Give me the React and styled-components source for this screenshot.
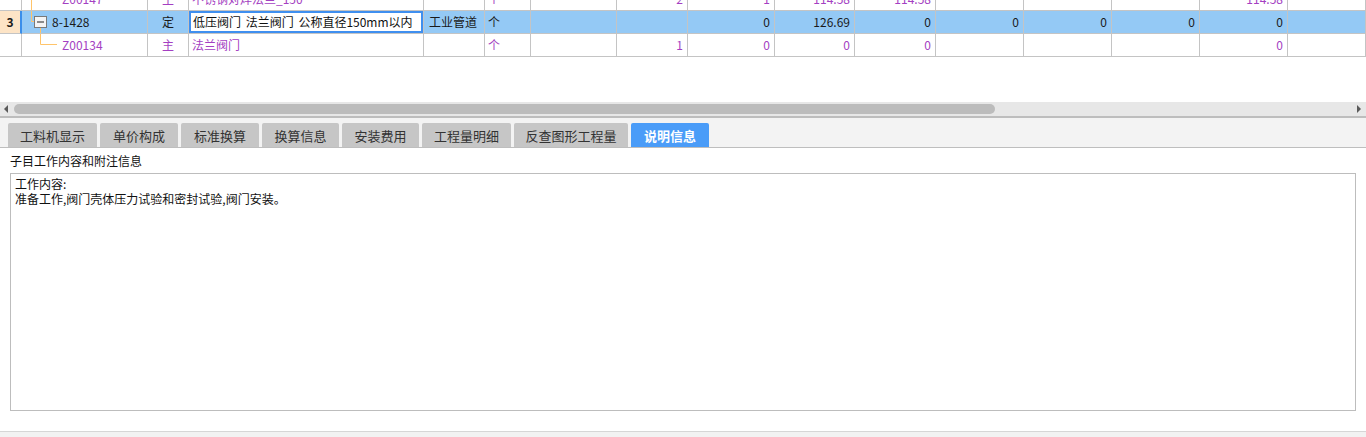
import React from "react";
import styled, { createGlobalStyle } from "styled-components";

const GlobalStyle = createGlobalStyle`
  html, body {
    margin: 0;
    padding: 0;
    background: #ffffff;
  }
  body {
    font-family: "Noto Sans CJK SC", "Noto Sans", sans-serif;
    font-size: 12px;
    color: #1a1a1a;
  }
`;

const COLS =
  "22px 126px 41px 235px 61px 46px 86px 71px 87px 80px 81px 88px 88px 88px 88px 1fr";

const rows = [
  {
    num: "",
    tree: "pass",
    code: "Z00147",
    type: "主",
    name: "不锈钢对焊法兰_150",
    spec: "",
    unit: "个",
    vals: ["", "2", "1", "114.58", "114.58", "", "", "", "114.58", ""],
    material: true,
  },
  {
    num: "3",
    tree: "parent",
    code: "8-1428",
    type: "定",
    name: "低压阀门 法兰阀门 公称直径150mm以内",
    spec: "工业管道",
    unit: "个",
    vals: ["", "", "0", "126.69", "0", "0", "0", "0", "0", ""],
    selected: true,
  },
  {
    num: "",
    tree: "child",
    code: "Z00134",
    type: "主",
    name: "法兰阀门",
    spec: "",
    unit: "个",
    vals: ["", "1", "0", "0", "0", "", "", "", "0", ""],
    material: true,
  },
];

const tabs = [
  { label: "工料机显示", w: 89 },
  { label: "单价构成", w: 78 },
  { label: "标准换算", w: 78 },
  { label: "换算信息", w: 77 },
  { label: "安装费用", w: 77 },
  { label: "工程量明细", w: 89 },
  { label: "反查图形工程量", w: 114 },
  { label: "说明信息", w: 78 },
];

const Page = styled.div`
  display: flex;
  flex-direction: column;
  height: 437px;
  overflow: hidden;
`;

const GridViewport = styled.div`
  height: 102px;
  overflow: hidden;
  background: #fff;
`;

const GridBody = styled.div`
  margin-top: -12px;
`;

const Row = styled.div`
  display: grid;
  grid-template-columns: ${COLS};
  height: 23px;
  background: ${(p) => (p.$selected ? "#94c9f5" : "#fff")};
  color: ${(p) => (p.$material ? "#a43fc2" : "#1a1a1a")};
`;

const Cell = styled.div`
  box-sizing: border-box;
  height: 23px;
  border-right: 1px solid #c4c4c4;
  border-bottom: 1px solid #c4c4c4;
  display: flex;
  align-items: center;
  justify-content: ${(p) =>
    p.$align === "right" ? "flex-end" : p.$align === "center" ? "center" : "flex-start"};
  padding: 0 ${(p) => (p.$align === "right" ? "4px" : "0")} 0
    ${(p) => (p.$pad ? p.$pad : 0)}px;
  white-space: nowrap;
  overflow: hidden;
  line-height: 22px;
`;

const NumCell = styled(Cell)`
  background: ${(p) => (p.$selected ? "#fde4c6" : "transparent")};
  border-right: ${(p) => (p.$selected ? "2px solid #3b8eea" : "1px solid #c4c4c4")};
  font-weight: bold;
  font-size: 12px;
  color: #1a1a1a;
`;

const CodeCell = styled(Cell)`
  gap: 0;
`;

const EditCell = styled(Cell)`
  background: ${(p) => (p.$editing ? "#fff" : "transparent")};
  box-shadow: ${(p) => (p.$editing ? "inset 0 0 0 2px #3f8fef" : "none")};
  color: ${(p) => (p.$editing ? "#111" : "inherit")};
  padding-left: ${(p) => (p.$editing ? 4 : 3)}px;
  word-spacing: ${(p) => (p.$editing ? "2px" : "0")};
`;

const TreeGlyph = styled.svg`
  flex: none;
  display: block;
`;

const CodeText = styled.span`
  font-size: 12px;
`;

const Tree = ({ kind }) => {
  if (kind === "parent") {
    return (
      <TreeGlyph width="30" height="22" viewBox="0 0 30 22">
        <path d="M9.5 0 V10.5 H12" stroke="#ffc46a" fill="none" />
        <rect x="12.5" y="5.5" width="12" height="11" fill="#f4f4f4" stroke="#7a7a7a" />
        <path d="M15 11 H22" stroke="#222" />
        <path d="M18.5 17 V22" stroke="#ffc46a" />
      </TreeGlyph>
    );
  }
  if (kind === "child") {
    return (
      <TreeGlyph width="40" height="22" viewBox="0 0 40 22">
        <path d="M18.5 0 V10.5 H35" stroke="#ffc46a" fill="none" />
      </TreeGlyph>
    );
  }
  return (
    <TreeGlyph width="40" height="22" viewBox="0 0 40 22">
      <path d="M9.5 0 V22" stroke="#ffc46a" />
    </TreeGlyph>
  );
};

const ScrollBar = styled.div`
  height: 14px;
  background: #e7e7e7;
  border-bottom: 2px solid #bdbdbd;
  display: flex;
  align-items: center;
  padding: 0 4px 0 4px;
  gap: 5px;
`;

const Arrow = styled.svg`
  flex: none;
  display: block;
`;

const Track = styled.div`
  flex: 1;
  height: 10px;
  display: flex;
`;

const Thumb = styled.div`
  width: 981px;
  height: 10px;
  border-radius: 5px;
  background: #bcbcbc;
`;

const TabBar = styled.div`
  display: flex;
  gap: 3px;
  padding: 5px 0 0 8px;
  background: #f3f3f3;
  border-bottom: 1px solid #bebebe;
`;

const Tab = styled.div`
  box-sizing: border-box;
  height: 24px;
  width: ${(p) => p.$w}px;
  display: flex;
  align-items: center;
  justify-content: center;
  white-space: nowrap;
  border-radius: 2px 2px 0 0;
  font-size: 13px;
  background: ${(p) => (p.$active ? "#4a9cf8" : "#c6c6c6")};
  color: ${(p) => (p.$active ? "#fff" : "#333")};
  font-weight: ${(p) => (p.$active ? "bold" : "normal")};
`;

const Detail = styled.div`
  flex: 1;
  display: flex;
  flex-direction: column;
  padding: 4px 10px 20px 10px;
  background: #fff;
`;

const DetailLabel = styled.div`
  line-height: 18px;
  font-size: 12px;
  color: #111;
  margin-bottom: 3px;
`;

const DetailBox = styled.div`
  flex: 1;
  border: 1px solid #bdbdbd;
  padding: 2px 4px;
  font-size: 12px;
  line-height: 15px;
  color: #111;
`;

const Footer = styled.div`
  height: 5px;
  border-top: 1px solid #d6d6d6;
  background: #f2f2f2;
`;

export default function App() {
  return (
    <>
      <GlobalStyle />
      <Page>
        <GridViewport>
          <GridBody>
            {rows.map((r, i) => (
              <Row key={i} $selected={r.selected} $material={r.material}>
                <NumCell $align="center" $selected={r.selected}>
                  {r.num}
                </NumCell>
                <CodeCell>
                  <Tree kind={r.tree} />
                  <CodeText>{r.code}</CodeText>
                </CodeCell>
                <Cell $align="center">{r.type}</Cell>
                <EditCell $editing={r.selected}>{r.name}</EditCell>
                <Cell $pad={5}>{r.spec}</Cell>
                <Cell $pad={3}>{r.unit}</Cell>
                {r.vals.map((v, j) => (
                  <Cell key={j} $align="right">
                    {v}
                  </Cell>
                ))}
              </Row>
            ))}
          </GridBody>
        </GridViewport>
        <ScrollBar>
          <Arrow width="5" height="8" viewBox="0 0 5 8">
            <polygon points="4,0 4,8 0,4" fill="#5a5a5a" />
          </Arrow>
          <Track>
            <Thumb />
          </Track>
          <Arrow width="5" height="8" viewBox="0 0 5 8">
            <polygon points="0,0 0,8 4,4" fill="#5a5a5a" />
          </Arrow>
        </ScrollBar>
        <TabBar>
          {tabs.map((t) => (
            <Tab key={t.label} $w={t.w} $active={t.label === "说明信息"}>
              {t.label}
            </Tab>
          ))}
        </TabBar>
        <Detail>
          <DetailLabel>子目工作内容和附注信息</DetailLabel>
          <DetailBox>
            工作内容:
            <br />
            准备工作,阀门壳体压力试验和密封试验,阀门安装。
          </DetailBox>
        </Detail>
        <Footer />
      </Page>
    </>
  );
}
